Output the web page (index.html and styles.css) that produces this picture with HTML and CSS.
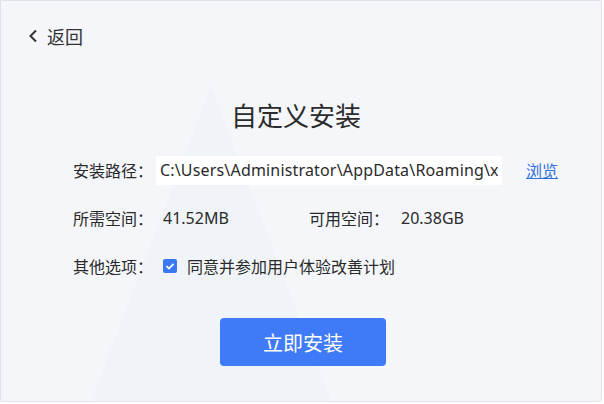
FILE: index.html
```html
<!DOCTYPE html>
<html>
  <head>
    <meta charset="utf-8">
    <title>自定义安装</title>
    <link rel="stylesheet" href="styles.css">
  </head>
  <body>
    <div class="window">
      <svg class="deco" width="600" height="400" viewBox="0 0 600 400">
        <polygon points="210,85 90,400 330,400" fill="#e9edf6" opacity="0.3"/>
      </svg>
      <div class="header">
        <a class="back" href="#">
          <svg width="10" height="14" viewBox="0 0 10 14"><path d="M8 1.5 L2.5 7 L8 12.5" fill="none" stroke="#333" stroke-width="2"/></svg>
          <span>返回</span>
        </a>
      </div>
      <h1 class="title">自定义安装</h1>
      <form class="options">
        <div class="row">
          <label class="label" for="path">安装路径：</label>
          <input id="path" class="path" type="text" value="C:\Users\Administrator\AppData\Roaming\x" readonly>
          <a class="browse" href="#">浏览</a>
        </div>
        <div class="row">
          <span class="label">所需空间：</span>
          <span class="value need">41.52MB</span>
          <span class="label">可用空间：</span>
          <span class="value free">20.38GB</span>
        </div>
        <div class="row">
          <span class="label">其他选项：</span>
          <label class="agree">
            <span class="check"><svg width="14" height="14" viewBox="0 0 14 14"><path d="M3.5 7.2 L6 9.5 L10.5 4.8" fill="none" stroke="#fff" stroke-width="1.8"/></svg></span>
            同意并参加用户体验改善计划
          </label>
        </div>
        <button class="install" type="button">立即安装</button>
      </form>
    </div>
  </body>
</html>
```

FILE: styles.css
```css
body {
  margin: 0;
  background: #ffffff;
  font-family: "Noto Sans CJK SC", "Noto Sans", sans-serif;
  color: #2a2a2a;
}

.window {
  position: relative;
  width: 600px;
  height: 400px;
  border: 1px solid #dfe2e8;
  border-radius: 0 0 4px 0;
  background: #f4f6fa;
  overflow: hidden;
}

.deco {
  position: absolute;
  left: 0;
  top: 0;
}

.header {
  position: relative;
  height: 72px;
  padding-left: 27px;
  display: flex;
  align-items: center;
}

.back {
  display: flex;
  align-items: center;
  gap: 9px;
  color: #333333;
  text-decoration: none;
  font-size: 18px;
  margin-top: -3px;
}

.title {
  position: relative;
  margin: 24px 0 0 0;
  font-size: 26px;
  line-height: 36px;
  font-weight: normal;
  text-align: center;
  color: #2b2b2b;
  padding-right: 10px;
}

.options {
  position: relative;
  margin: 22px 0 0 72px;
}

.row {
  display: flex;
  align-items: center;
  height: 30px;
  margin-bottom: 18px;
  font-size: 16px;
}

.label {
  width: 83px;
  flex: none;
}

.path {
  width: 346px;
  height: 29px;
  box-sizing: border-box;
  border: none;
  padding: 0 4px;
  background: #ffffff;
  font-family: "Noto Sans", "Noto Sans CJK SC", sans-serif;
  font-size: 16px;
  letter-spacing: 0.17px;
  color: #2a2a2a;
  outline: none;
}

.browse {
  margin-left: 24px;
  color: #2f6fe0;
  font-size: 16px;
}

.value {
  padding-left: 7px;
  font-family: "Noto Sans", "Noto Sans CJK SC", sans-serif;
}

.need {
  width: 146px;
}

.free {
  padding-left: 9px;
}

.agree {
  display: flex;
  align-items: center;
  gap: 10px;
  padding-left: 7px;
}

.check {
  display: block;
  width: 14px;
  height: 14px;
  border-radius: 2px;
  background: #3a77f2;
}

.check svg {
  display: block;
}

.install {
  display: block;
  margin: 37px 0 0 147px;
  width: 166px;
  height: 48px;
  border: none;
  border-radius: 4px;
  background: #3f7bf7;
  color: #ffffff;
  font-family: "Noto Sans CJK SC", sans-serif;
  font-size: 20px;
}
```
